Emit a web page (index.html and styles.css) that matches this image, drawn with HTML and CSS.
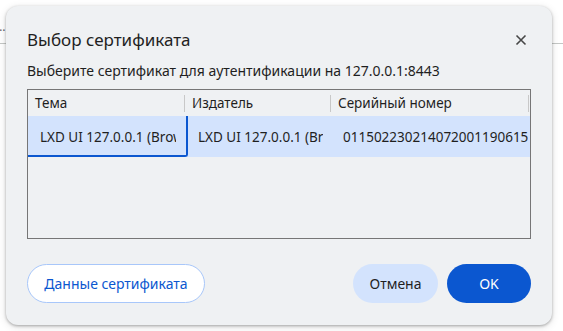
FILE: index.html
```html
<!DOCTYPE html>
<html lang="ru">
<head>
    <meta charset="UTF-8">
    <meta name="viewport" content="width=device-width, initial-scale=1.0">
    <title>Выбор сертификата</title>
    <link rel="stylesheet" href="styles.css">
</head>
<body>
    <div class="page-bar">
        <span class="page-crumb">…</span>
    </div>

    <div class="dialog">
        <div class="dialog-header">
            <h2>Выбор сертификата</h2>
            <button class="close-btn" aria-label="Закрыть">
                <svg width="12" height="12" viewBox="0 0 12 12">
                    <path d="M1.5 1.5 L10.5 10.5 M10.5 1.5 L1.5 10.5" stroke="#474747" stroke-width="1.6" fill="none"/>
                </svg>
            </button>
        </div>
        <p class="dialog-text">Выберите сертификат для аутентификации на 127.0.0.1:8443</p>

        <div class="cert-table">
            <div class="table-head">
                <div class="col col-subject">Тема</div>
                <div class="col col-issuer">Издатель</div>
                <div class="col col-serial">Серийный номер</div>
            </div>
            <div class="table-row selected">
                <div class="cell col-subject focused"><span>LXD UI 127.0.0.1 (Browser)</span></div>
                <div class="cell col-issuer"><span>LXD UI 127.0.0.1 (Browser)</span></div>
                <div class="cell col-serial"><span>01150223021407200119061523</span></div>
            </div>
        </div>

        <div class="dialog-footer">
            <button class="btn btn-outline">Данные сертификата</button>
            <div class="footer-right">
                <button class="btn btn-tonal">Отмена</button>
                <button class="btn btn-primary">OK</button>
            </div>
        </div>
    </div>
</body>
</html>
```

FILE: styles.css
```css
* {
    margin: 0;
    padding: 0;
    box-sizing: border-box;
}

body {
    font-family: 'Noto Sans', 'Open Sans', sans-serif;
    background: #ffffff;
    color: #1f1f1f;
    width: 563px;
    height: 331px;
    overflow: hidden;
    position: relative;
}

.page-bar {
    height: 44px;
    border-bottom: 1px solid #c4c7c5;
    position: relative;
}

.page-crumb {
    position: absolute;
    left: -4px;
    top: 18px;
    font-size: 12px;
    color: #5f6368;
}

.dialog {
    position: absolute;
    left: 6px;
    top: 6px;
    width: 546px;
    height: 319px;
    background: #eff1f3;
    border-radius: 12px;
    box-shadow: 0 1px 3px rgba(0, 0, 0, 0.3), 0 2px 8px rgba(0, 0, 0, 0.12);
    padding: 22px 21px 22px 21px;
    display: flex;
    flex-direction: column;
}

.dialog-header {
    display: flex;
    align-items: center;
    justify-content: space-between;
    height: 24px;
}

.dialog-header h2 {
    font-size: 17px;
    font-weight: 400;
    line-height: 24px;
}

.close-btn {
    background: none;
    border: none;
    width: 20px;
    height: 20px;
    display: flex;
    align-items: center;
    justify-content: center;
}

.dialog-text {
    font-size: 14px;
    line-height: 18px;
    margin-top: 10px;
}

.cert-table {
    margin-top: 9px;
    height: 150px;
    border: 1px solid #767676;
}

.table-head {
    display: flex;
    height: 26px;
    align-items: center;
}

.col {
    font-size: 13.5px;
    padding-left: 7px;
    border-right: 1px solid #c8c8c8;
    height: 17px;
    line-height: 17px;
}

.col-subject {
    width: 157px;
}

.col-issuer {
    width: 146px;
}

.col-serial {
    width: 198px;
}

.table-row {
    display: flex;
    height: 41px;
}

.table-row.selected {
    background: #d3e3fd;
}

.cell {
    font-size: 13.5px;
    padding: 0 10px 0 12px;
    display: flex;
    align-items: center;
    overflow: hidden;
    white-space: nowrap;
}

.cell span {
    overflow: hidden;
    display: block;
}

.cell.col-subject {
    width: 160px;
    border-right: 2px solid #0b57d0;
    border-bottom: 2px solid #0b57d0;
    border-bottom-right-radius: 3px;
    padding-top: 2px;
}

.cell.col-issuer {
    width: 145px;
    padding-left: 10px;
}

.cell.col-serial {
    flex: 1;
    padding-left: 10px;
    padding-right: 2px;
}

.dialog-footer {
    margin-top: auto;
    display: flex;
    justify-content: space-between;
    align-items: center;
}

.footer-right {
    display: flex;
    gap: 9px;
}

.btn {
    height: 39px;
    border-radius: 20px;
    font-family: 'Noto Sans', 'Open Sans', sans-serif;
    font-size: 14px;
    border: 1px solid transparent;
    padding: 0 15px;
}

.btn-outline {
    width: 178px;
    background: #ffffff;
    border-color: #a8c7fa;
    color: #0b57d0;
}

.btn-tonal {
    width: 85px;
    background: #d3e3fd;
    color: #1f1f1f;
}

.btn-primary {
    width: 84px;
    background: #0b57d0;
    color: #ffffff;
}
```
